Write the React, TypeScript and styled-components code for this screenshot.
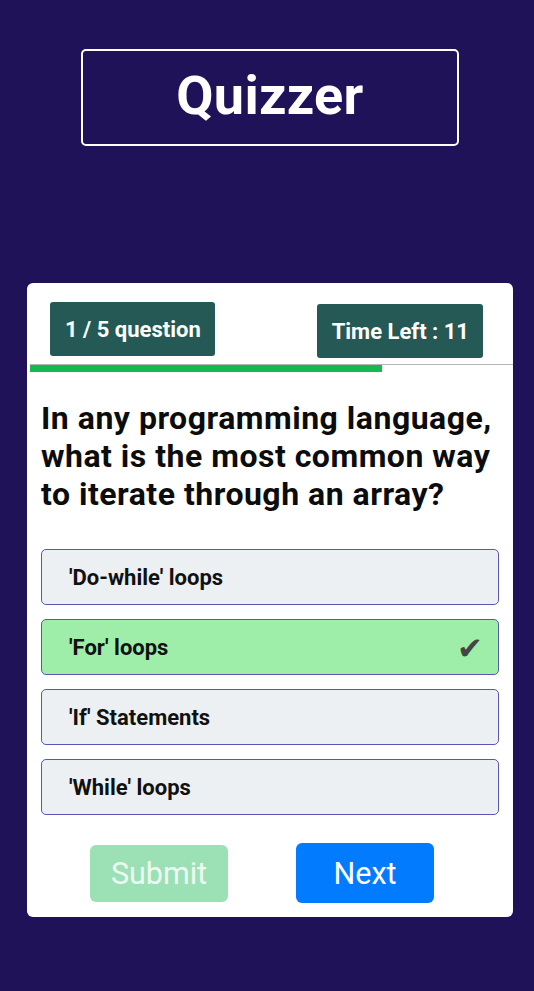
import React from "react";
import styled, { createGlobalStyle } from "styled-components";

const Global = createGlobalStyle`
  html, body { margin: 0; padding: 0; }
  body {
    background: #1f1259;
    font-family: Roboto, "Liberation Sans", Arial, sans-serif;
    min-height: 991px;
  }
  * { box-sizing: border-box; }
`;

const Page = styled.div`
  width: 534px;
  min-height: 991px;
  background: #1f1259;
  padding-top: 49px;
  display: flex;
  flex-direction: column;
`;

const TitleBox = styled.div`
  margin-left: 81px;
  width: 378px;
  height: 97px;
  border: 2px solid #ffffff;
  border-radius: 5px;
  display: flex;
  align-items: center;
  justify-content: center;
  color: #ffffff;
  font-size: 54px;
  font-weight: 700;
  letter-spacing: 0.3px;
  padding-bottom: 4px;
`;

const Card = styled.div`
  margin-top: 137px;
  margin-left: 27px;
  width: 486px;
  height: 634px;
  background: #ffffff;
  border-radius: 6px;
  display: flex;
  flex-direction: column;
`;

const TopRow = styled.div`
  display: flex;
  justify-content: space-between;
  align-items: flex-start;
  padding: 19px 30px 0 23px;
  height: 81px;
`;

const Badge = styled.div<{ $offset?: number }>`
  background: #245955;
  color: #ffffff;
  font-size: 22px;
  font-weight: 700;
  border-radius: 3px;
  height: 54px;
  padding: 0 14px 0 15px;
  display: flex;
  align-items: center;
  margin-top: ${(p) => p.$offset ?? 0}px;
`;

const Track = styled.div`
  margin-left: 3px;
  border-top: 1px solid #b5b5b5;
  height: 8px;
`;

const Fill = styled.div`
  height: 7px;
  background: #14b94f;
`;

const Question = styled.h2`
  margin: 27px 8px 0 14px;
  font-size: 32px;
  line-height: 38px;
  font-weight: 700;
  letter-spacing: 0.5px;
  color: #0c0c0c;
`;

const Options = styled.div`
  margin: 36px 14px 0 14px;
  display: flex;
  flex-direction: column;
  gap: 14px;
`;

const Option = styled.div<{ $selected?: boolean }>`
  height: 56px;
  border: 1px solid #5b56b3;
  border-radius: 5px;
  background: ${(p) => (p.$selected ? "#9eeeaa" : "#edf0f2")};
  display: flex;
  align-items: center;
  justify-content: space-between;
  padding: 0 15px 0 27px;
  font-size: 22px;
  font-weight: 700;
  color: #111111;
`;

const Check = styled.span`
  color: #454545;
  font-size: 31px;
  font-family: "DejaVu Sans", sans-serif;
  line-height: 1;
  margin-top: 2px;
`;

const Actions = styled.div`
  margin-top: 28px;
  padding-left: 63px;
  display: flex;
  align-items: center;
  gap: 68px;
`;

const Button = styled.button<{ $variant: "submit" | "next" }>`
  width: 138px;
  height: ${(p) => (p.$variant === "next" ? 60 : 57)}px;
  border: none;
  border-radius: 6px;
  font-family: Roboto, "Liberation Sans", Arial, sans-serif;
  font-size: 30.5px;
  font-weight: 400;
  color: ${(p) => (p.$variant === "next" ? "#ffffff" : "#eefaf2")};
  background: ${(p) => (p.$variant === "next" ? "#037bff" : "#9be1b5")};
  padding: 0;
`;

const options = [
  { text: "'Do-while' loops", selected: false },
  { text: "'For' loops", selected: true },
  { text: "'If' Statements", selected: false },
  { text: "'While' loops", selected: false },
];

export default function App() {
  const progress = 352 / 483;
  return (
    <>
      <Global />
      <Page>
        <TitleBox>Quizzer</TitleBox>
        <Card>
          <TopRow>
            <Badge>1 / 5 question</Badge>
            <Badge $offset={2}>Time Left : 11</Badge>
          </TopRow>
          <Track>
            <Fill style={{ width: `${progress * 100}%` }} />
          </Track>
          <Question>
            In any programming language, what is the most common way to iterate
            through an array?
          </Question>
          <Options>
            {options.map((o) => (
              <Option key={o.text} $selected={o.selected}>
                <span>{o.text}</span>
                {o.selected && <Check>✔</Check>}
              </Option>
            ))}
          </Options>
          <Actions>
            <Button $variant="submit" disabled>
              Submit
            </Button>
            <Button $variant="next">Next</Button>
          </Actions>
        </Card>
      </Page>
    </>
  );
}
